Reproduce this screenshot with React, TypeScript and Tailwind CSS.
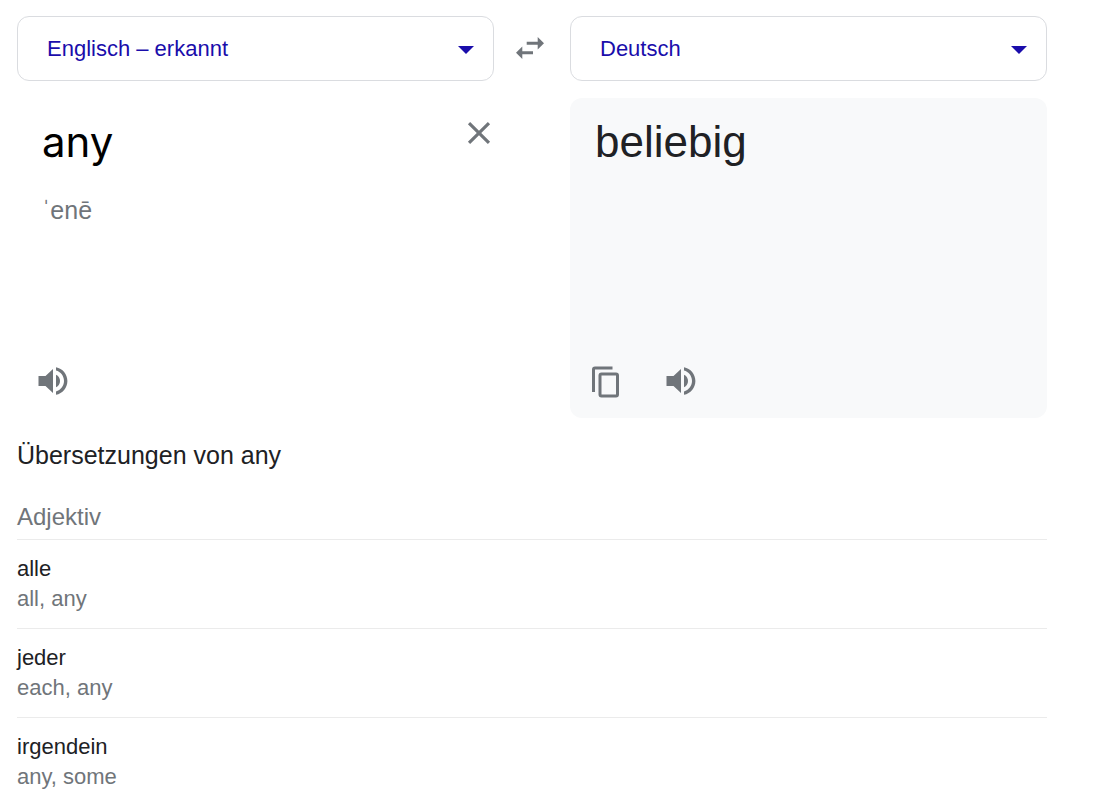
import React, { useState } from 'react'

interface IconProps {
  className?: string
}

interface LanguageSelectProps {
  label: string
  value: string
  options: string[]
  onChange: (value: string) => void
}

const SOURCE_LANGUAGES = ['Englisch – erkannt', 'Englisch', 'Deutsch', 'Französisch', 'Spanisch']
const TARGET_LANGUAGES = ['Deutsch', 'Englisch', 'Französisch', 'Spanisch']

const ADJECTIVES = [
  { word: 'alle', meanings: 'all, any' },
  { word: 'jeder', meanings: 'each, any' },
  { word: 'irgendein', meanings: 'any, some' },
]

const SwapIcon = ({ className }: IconProps) => (
  <svg className={className} viewBox="0 0 28 22" fill="currentColor" aria-hidden="true">
    <path d="M10.7 4.8H21.7V0L28 6.2l-6.3 6.3V7.7h-11zM17 17.2H6.3V22L0 15.8l6.3-6.3v4.8H17z" />
  </svg>
)

const CloseIcon = ({ className }: IconProps) => (
  <svg className={className} viewBox="0 0 24 24" fill="currentColor" aria-hidden="true">
    <path d="M19 6.41 17.59 5 12 10.59 6.41 5 5 6.41 10.59 12 5 17.59 6.41 19 12 13.41 17.59 19 19 17.59 13.41 12 19 6.41z" />
  </svg>
)

const SpeakerIcon = ({ className }: IconProps) => (
  <svg className={className} viewBox="0 0 30 30" fill="currentColor" aria-hidden="true">
    <path d="M.5 10h7L15 3v24l-7.500-7H.5z" />
    <path d="M18 8.700c2.500 1.200 4 3.600 4 6.300s-1.500 5.100-4 6.300z" />
    <path d="M18 1.200c6.600 1.200 11.400 7 11.400 13.800S24.600 27.600 18 28.800v-3.400c4.700-1.300 8-5.500 8-10.400s-3.300-9.100-8-10.400z" />
  </svg>
)

const CopyIcon = ({ className }: IconProps) => (
  <svg
    className={className}
    viewBox="0 0 28 32"
    fill="none"
    stroke="currentColor"
    strokeWidth="3"
    aria-hidden="true"
  >
    <path d="M1.500 26V3.500a1.500 1.500 0 0 1 1.500-1.500h17.500" />
    <rect x="8" y="8" width="17.500" height="22" rx="1.500" />
  </svg>
)

const LanguageSelect = ({ label, value, options, onChange }: LanguageSelectProps) => (
  <div className="grid min-w-0 flex-1 items-center">
    <select
      className="col-start-1 row-start-1 h-[65px] w-full appearance-none rounded-xl border border-[#dadce0] bg-white pr-12 pl-[29px] text-[22px] text-[#1a0dab]"
      aria-label={label}
      value={value}
      onChange={(e) => onChange(e.target.value)}
    >
      {options.map((option) => (
        <option key={option}>{option}</option>
      ))}
    </select>
    <svg
      className="pointer-events-none col-start-1 row-start-1 mt-0.5 mr-5 h-2 w-4 justify-self-end text-[#1a0dab]"
      viewBox="0 0 16 8"
      fill="currentColor"
      aria-hidden="true"
    >
      <path d="M0 0h16L8 8z" />
    </svg>
  </div>
)

export default function App() {
  const [source, setSource] = useState('Englisch – erkannt')
  const [target, setTarget] = useState('Deutsch')
  const [text, setText] = useState('any')

  return (
    <main className="bg-white pt-4 pr-[63px] pl-[17px] font-['Liberation_Sans',Arial,sans-serif] text-[#202124]">
      <div className="flex items-center">
        <LanguageSelect
          label="Ausgangssprache"
          value={source}
          options={SOURCE_LANGUAGES}
          onChange={setSource}
        />
        <button
          className="flex w-[76px] justify-center pb-px text-[#70757a]"
          type="button"
          aria-label="Sprachen tauschen"
        >
          <SwapIcon className="mr-1 h-[22px] w-7" />
        </button>
        <LanguageSelect
          label="Zielsprache"
          value={target}
          options={TARGET_LANGUAGES}
          onChange={setTarget}
        />
      </div>

      <div className="mt-[17px] flex">
        <section className="flex h-[320px] min-w-0 flex-1 flex-col pb-5">
          <div className="flex items-start pt-4 pl-[25px]">
            <textarea
              className="h-14 min-w-0 flex-1 resize-none overflow-hidden font-[Inter,sans-serif] text-[42px] leading-[56px] text-black outline-none"
              aria-label="Ausgangstext"
              rows={1}
              value={text}
              onChange={(e) => setText(e.target.value)}
            />
            <button
              className="-mr-1 text-[#70757a]"
              type="button"
              aria-label="Text löschen"
              onClick={() => setText('')}
            >
              <CloseIcon className="size-[38px]" />
            </button>
          </div>
          <p className="mt-6 pl-[25px] text-[25px] leading-8 text-[#70757a]">ˈenē</p>
          <button
            className="mt-auto ml-[21px] h-8 self-start text-[#70757a]"
            type="button"
            aria-label="Ausgangstext anhören"
          >
            <SpeakerIcon className="mb-0.5 size-[30px]" />
          </button>
        </section>

        <section className="ml-[76px] flex h-[320px] min-w-0 flex-1 flex-col rounded-xl bg-[#f8f9fa] pb-5">
          <p className="pt-4 pl-[25px] text-[44px] leading-[56px]">beliebig</p>
          <div className="mt-auto flex items-start gap-[46px] pl-[22px] text-[#70757a]">
            <button type="button" aria-label="Übersetzung kopieren">
              <CopyIcon className="h-8 w-7" />
            </button>
            <button type="button" aria-label="Übersetzung anhören">
              <SpeakerIcon className="size-[30px]" />
            </button>
          </div>
        </section>
      </div>

      <section>
        <h2 className="mt-[19px] text-[25px] leading-9">Übersetzungen von any</h2>
        <h3 className="mt-[26px] pb-1 text-2xl leading-9 text-[#70757a]">Adjektiv</h3>
        <ul>
          {ADJECTIVES.map(({ word, meanings }) => (
            <li
              key={word}
              className="border-t border-[#ebebeb] py-3.5 text-[22px] leading-[30px] last:pb-0"
            >
              <p>{word}</p>
              <p className="text-[#70757a]">{meanings}</p>
            </li>
          ))}
        </ul>
      </section>
    </main>
  )
}
